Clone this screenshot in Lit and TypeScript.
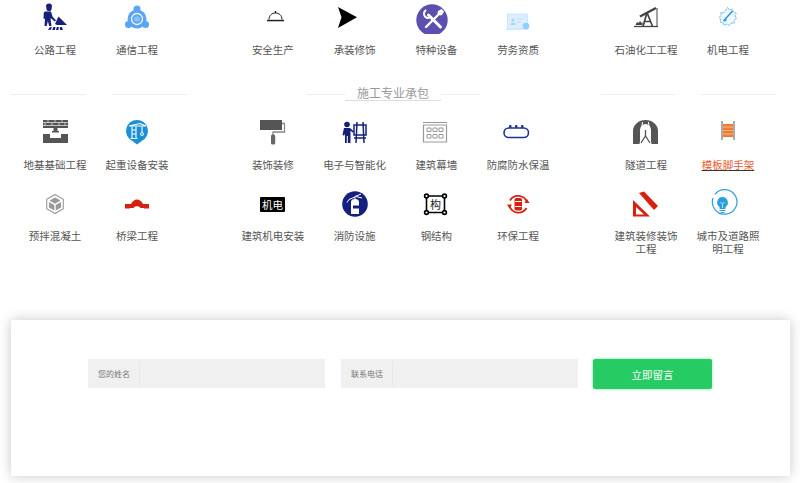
import { LitElement, html, css, svg, SVGTemplateResult } from "lit";
import { customElement } from "lit/decorators.js";

const NAVY = "#16207c";
const RED = "#d8200f";
const GR = "#555";

const icons: Record<string, SVGTemplateResult> = {
  worker: svg`<g fill="${NAVY}"><circle cx="14" cy="6.500" r="2.600"/><path d="M11 4.500a3 3 0 0 1 6 0v1h-6z"/><path d="M10 9.500h6l1.500 5 3.500 4-1.300 1-4-3.500v2.500l.8 5.500h-2.400l-1.200-5-1.200 5H9.500l.5-7-1.500-.5.300-6z"/><path d="M20 22l3.500-7.500L32 23H22z"/><path d="M13 28l2-3h2l-1.500 3zm4 0 1.500-3h2L20 28zm4 0 .8-3h2l-.3 3zm4 0-.2-3h2l1.200 3z"/></g>`,
  comm: svg`<g fill="#5aa5f5"><circle cx="20" cy="17" r="9.500"/><circle cx="20" cy="7" r="3.500"/><circle cx="11.500" cy="22.500" r="3.500"/><circle cx="28.500" cy="22.500" r="3.500"/></g><circle cx="20" cy="17" r="5.500" fill="none" stroke="#fff" stroke-width="1.300"/><circle cx="20" cy="17" r="2.800" fill="#8cc2f8"/>`,
  hat: svg`<g fill="none" stroke="#222" stroke-width="1"><path d="M16 17.500c0-4 2.800-6.500 6.500-6.500s6.500 2.500 6.500 6.500"/></g><path d="M14 17.800h17v1.500H14z" fill="#222"/><path d="M21.800 9h1.400v2h-1.400z" fill="#222"/>`,
  arrow: svg`<path d="M3 5l19 10.300L3 26l3.500-10.700z" fill="#000"/>`,
  tools: svg`<defs><clipPath id="c5"><rect x="0" y="0" width="34" height="32"/></clipPath></defs><circle cx="16" cy="18" r="15.700" fill="#5b4fb0" clip-path="url(#c5)"/><g stroke="#fff" fill="none" stroke-linecap="round"><path d="M12.500 13l12 12" stroke-width="3"/><path d="M23.500 11.500L10 25" stroke-width="2.400"/><path d="M9.500 8.500a4.200 4.200 0 0 0-.5 6 4.200 4.200 0 0 0 5.800 .500" stroke-width="2"/></g><path d="M22 9l3.500-2 2.500 2.500-2 3.500-2 .5-2.500-2.500z" fill="#fff"/>`,
  card: svg`<path d="M8 27.500h23" stroke="#dcefff" stroke-width="1"/><rect x="9.500" y="12" width="20" height="15" fill="#dcefff" stroke="#c3e2fb" stroke-width=".8"/><circle cx="15" cy="18" r="1.500" fill="#a9d6f8"/><path d="M12.500 23c0-2 1-2.500 2.500-2.500s2.500.5 2.500 2.500z" fill="#a9d6f8"/><path d="M19 17h7M19 20h4" stroke="#bfe0fb"/><circle cx="28" cy="24" r="3.300" fill="#8fd0fa"/>`,
  pump: svg`<g fill="none" stroke="#444"><path d="M8 24.500h24" stroke-width="1.300"/><path d="M14 14.500l16-8.500" stroke-width="2.400"/><path d="M31 6v18.500" stroke-width="1"/><path d="M21 10.500l-4 14M21 10.500l5.500 14M18.500 19.500h6.500" stroke-width="1.700"/></g><path d="M9.500 23l1.500-3 1.500 1 1.500-2 1.500 2 1-1v3z" fill="#444"/>`,
  gear: svg`<path d="M19.500 5.500l2 2.500 3-1 .7 3 3 1-1.200 3 1.500 2.500-2.500 1.700.2 3-3-.2-1.500 2.500-2.700-1.500-2.800 1.500-1.200-2.800-3-.7.700-3L11 15.500l2.300-2-.5-3 3 .2z" fill="#eef8fe" stroke="#6fc1ee" stroke-width="1" stroke-dasharray="3 .7"/><path d="M24.500 9l-9 10" stroke="#1c8fd8" stroke-width="1.300"/><path d="M18 17l-2.500 3.500 3.500-2.500z" fill="#1c8fd8"/>`,
  found: svg`<path d="M8 3h25v8H8z" fill="${GR}"/><path d="M8 5.500h25M8 8.500h25M13 3v2.500M20 3v2.500M27 3v2.500M10 5.500v3M17 5.500v3M24 5.500v3M30 5.500v3" stroke="#ddd" stroke-width=".8"/><path d="M18.500 11h4v3h1.500v1.500h-7V14h1.500z" fill="${GR}"/><path d="M8 17h7v4h11v-4h7v9H8z" fill="${GR}"/>`,
  crane: svg`<path d="M20 3a11 11 0 0 1 5 20.800L20 27.500l-5-3.700A11 11 0 0 1 20 3z" fill="#1a90d8"/><g fill="none" stroke="#fff" stroke-width="1.100"><path d="M12 9l11-2.500 6 2.500H12z"/><path d="M15 9.500v12M19 9.500v12M15 13h4M15 17h4M13.500 21.500h7"/><path d="M25 9.500v6"/></g><circle cx="25" cy="17" r="1.500" fill="none" stroke="#fff"/>`,
  roller: svg`<rect x="7" y="3" width="22" height="10" fill="${GR}"/><path d="M29 6.500h2.500v8.500H20v3" fill="none" stroke="#888" stroke-width="1.300"/><rect x="18" y="17.500" width="4.200" height="10" rx="1.500" fill="#666"/>`,
  teach: svg`<g fill="${NAVY}"><circle cx="12" cy="7.500" r="2.800"/><path d="M9 11h6l4 3.500-1 1.300-2.500-2V26h-2.700v-7h-1v7H10V16.800l-1 2-1.500-1z"/></g><g fill="none" stroke="${NAVY}" stroke-width="1.500"><path d="M19 8h12v10H19zM22 5l-1 21M28 5l1 21M19 21h12"/></g>`,
  curtain: svg`<g fill="none" stroke="#999"><path d="M7 5.500h24" stroke-width="1"/><path d="M7.500 8h23v17h-23z" stroke-width="1.200"/><path d="M11 11h4v3.500h-4zM17 11h4v3.500h-4zM23 11h4v3.500h-4zM11 17.500h4V21h-4zM17 17.500h4V21h-4zM23 17.500h4V21h-4z" stroke-width="1"/></g>`,
  water: svg`<rect x="6" y="11" width="24.500" height="9.500" rx="4.700" fill="none" stroke="#1f3590" stroke-width="1.600"/><g fill="#1f3590"><rect x="11" y="8" width="2.500" height="3" rx="1"/><rect x="17" y="8" width="2.500" height="3" rx="1"/><rect x="23" y="8" width="2.500" height="3" rx="1"/></g>`,
  tunnel: svg`<path d="M7 27V14a12.500 11 0 0 1 25 0v13h-6.500l-.5-3V13a5.500 6 0 0 0-11 0v11l-.5 3z" fill="${GR}"/><path d="M16.500 5l-1 9M22.500 5l1 9" stroke="#fff" stroke-width="1"/><path d="M15 26l4.500-7 4.500 7" fill="none" stroke="${GR}" stroke-width="1.300"/><path d="M19.500 13v6" stroke="${GR}" stroke-width="1.300"/>`,
  scaffold: svg`<rect x="13" y="4" width="2" height="19" fill="#aaa"/><rect x="25" y="4" width="2" height="19" fill="#aaa"/><rect x="15" y="7" width="10" height="13" fill="#f07c30"/><path d="M15 10h10M15 13.500h10M15 17h10" stroke="#fbc79e" stroke-width=".8"/>`,
  hex: svg`<path d="M20 5.500l8.300 4.700v9.600L20 24.500l-8.300-4.700v-9.600z" fill="none" stroke="#999" stroke-width="1.100"/><path d="M20 8.500l5.500 3.100-5.500 3.100-5.500-3.100zM14 13l5.300 3v5.500L14 18.500zM26 13l-5.300 3v5.500l5.300-3z" fill="#999"/>`,
  bridge: svg`<path d="M8 15h6c1.500-3 3.700-4.500 6-4.500s4.500 1.500 6 4.500h6v4.500h-5V19h-3.500c-.8-1.200-2-1.700-3.500-1.700s-2.700.5-3.500 1.700H13v.5H8z" fill="${RED}"/>`,
  mep: svg`<rect x="7" y="8" width="25" height="15" rx="1" fill="#000"/><text x="19.500" y="19.500" font-size="10.500" fill="#fff" text-anchor="middle" font-family="'Noto Sans CJK SC',sans-serif">机电</text>`,
  fire: svg`<circle cx="20" cy="15" r="12.800" fill="#14207f"/><path d="M16 13c0-2 1.500-3 4-3s4 1 4 3v12h-8z" fill="#fff"/><path d="M20 10V7.500M20 8l-6 2.500-2 3M20 7.500l6-2.500M21 7.500l6 1.500" stroke="#fff" stroke-width="1" fill="none"/><path d="M18 16.500h6v3h-6z" fill="#14207f"/>`,
  steel: svg`<path d="M10.500 7h18v16.500h-18z" fill="none" stroke="#000" stroke-width="1.600"/><g fill="#fff" stroke="#000" stroke-width="1.600"><circle cx="10.500" cy="7" r="1.900"/><circle cx="28.500" cy="7" r="1.900"/><circle cx="10.500" cy="23.500" r="1.900"/><circle cx="28.500" cy="23.500" r="1.900"/></g><text x="19.500" y="19.500" font-size="11" text-anchor="middle" fill="#222" font-family="'Noto Sans CJK SC',sans-serif">构</text>`,
  eco: svg`<g fill="none" stroke="${RED}" stroke-width="1.800"><path d="M12 11.500A9.500 9.500 0 0 1 29 13"/><path d="M28.500 19A9.500 9.500 0 0 1 11.500 17.500"/></g><path d="M9 15.500l2.500 4 2.500-4zM26.500 14l2.500-4 2.500 4z" fill="${RED}"/><rect x="16.500" y="9" width="7.500" height="12.500" rx="1.800" fill="${RED}"/><path d="M17 12.500h6.500M17 17.500h6.500" stroke="#fff" stroke-width="1"/>`,
  square: svg`<path d="M7 11v16.500h17zM10 18l8 7.500h-8z" fill="${RED}" fill-rule="evenodd"/><path d="M13 4l5-1.500 14 14.500-4 4z" fill="${RED}"/>`,
  bulb: svg`<path d="M7 5.300A12.300 12.300 0 1 1 5 9" fill="none" stroke="#2a9fdc" stroke-width="1.200"/><path d="M14.500 8a5.500 5.500 0 0 1 3 10v2h-6v-2a5.500 5.500 0 0 1 3-10z" fill="#2a9fdc"/><path d="M11.500 21.500h6M12.500 23.500h4" stroke="#2a9fdc" stroke-width="1.200"/><path d="M12.500 13l2 2 2-2M14.500 15v4" stroke="#fff" stroke-width=".7" fill="none"/>`,
};

type Item = { n: string; i: string; hot?: boolean };

const rowA: Item[][] = [
  [{ n: "公路工程", i: "worker" }, { n: "通信工程", i: "comm" }],
  [{ n: "安全生产", i: "hat" }, { n: "承装修饰", i: "arrow" }, { n: "特种设备", i: "tools" }, { n: "劳务资质", i: "card" }],
  [{ n: "石油化工工程", i: "pump" }, { n: "机电工程", i: "gear" }],
];
const rowB: Item[][] = [
  [{ n: "地基基础工程", i: "found" }, { n: "起重设备安装", i: "crane" }, { n: "预拌混凝土", i: "hex" }, { n: "桥梁工程", i: "bridge" }],
  [
    { n: "装饰装修", i: "roller" }, { n: "电子与智能化", i: "teach" }, { n: "建筑幕墙", i: "curtain" }, { n: "防腐防水保温", i: "water" },
    { n: "建筑机电安装", i: "mep" }, { n: "消防设施", i: "fire" }, { n: "钢结构", i: "steel" }, { n: "环保工程", i: "eco" },
  ],
  [
    { n: "隧道工程", i: "tunnel" }, { n: "模板脚手架", i: "scaffold", hot: true },
    { n: "建筑装修装饰工程", i: "square" }, { n: "城市及道路照明工程", i: "bulb" },
  ],
];

@customElement("app-root")
export class AppRoot extends LitElement {
  static styles = css`
    :host {
      display: block;
      width: 800px;
      height: 483px;
      overflow: hidden;
      background: #fff;
      font-family: "Noto Sans CJK SC", "Liberation Sans", sans-serif;
    }
    .groups {
      display: flex;
      padding-left: 14px;
    }
    .top {
      padding-top: 2px;
      height: 83px;
    }
    .g2 { margin-left: 54px; }
    .g3 { margin-left: 46px; }
    .cols2, .cols4 {
      display: grid;
      grid-auto-rows: 71.5px;
    }
    .cols2 { grid-template-columns: repeat(2, 82px); }
    .cols4 { grid-template-columns: repeat(4, 81.75px); }
    .item {
      display: flex;
      flex-direction: column;
      align-items: center;
      padding: 0 5px;
      color: #555;
      font-size: 10.5px;
      line-height: 13px;
      text-align: center;
    }
    .item svg {
      display: block;
      width: 40px;
      height: 36px;
      flex: none;
      margin-bottom: 4.5px;
    }
    .hot {
      color: #e8592a;
      text-decoration: underline;
      text-decoration-color: #333;
    }
    .divider {
      display: flex;
      align-items: flex-start;
      height: 16px;
      margin-bottom: 16px;
      padding-left: 10px;
    }
    .rule {
      flex: none;
      height: 1px;
      margin-top: 9px;
      background: #eee;
    }
    .r76 { width: 76px; }
    .r75 { width: 75px; margin-left: 26px; }
    .r39a { width: 39px; margin-left: 119px; }
    .r39b { width: 39px; }
    .r74 { width: 74px; margin-left: 121px; }
    .title {
      flex: none;
      width: 96px;
      height: 15px;
      border-bottom: 1px solid #ddd;
      text-align: center;
      font-size: 12px;
      line-height: 15px;
      color: #999;
    }
    .card {
      display: flex;
      align-items: flex-start;
      box-sizing: border-box;
      width: 779px;
      height: 156px;
      margin: 60px 0 0 11px;
      padding: 39px 0 0 77px;
      background: #fff;
      box-shadow: 0 0 12px rgba(0, 0, 0, 0.22);
    }
    .field {
      display: flex;
      align-items: center;
      flex: none;
      width: 237px;
      height: 29px;
      margin-right: 16px;
      background: #f0f0f0;
    }
    .field + .field { margin-right: 15px; }
    .field label {
      flex: none;
      box-sizing: border-box;
      width: 52px;
      height: 25px;
      padding-left: 10px;
      border-right: 1px solid #e8e8e8;
      font-size: 8px;
      line-height: 25px;
      color: #777;
    }
    .field input {
      flex: 1;
      min-width: 0;
      height: 100%;
      border: 0;
      padding: 0;
      background: transparent;
    }
    button {
      flex: none;
      width: 119px;
      height: 30px;
      border: 0;
      border-radius: 2px;
      background: #26cc63;
      box-shadow: 0 0 3px rgba(38, 204, 99, 0.6);
      color: #fff;
      font: inherit;
      font-size: 10.5px;
    }
  `;

  private item(it: Item) {
    return html`<div class="item">
      <svg viewBox="0 0 40 36">${icons[it.i]}</svg>
      <span class=${it.hot ? "hot" : ""}>${it.n}</span>
    </div>`;
  }

  private groups(data: Item[][], top = false) {
    return html`<div class="groups ${top ? "top" : ""}">
      ${data.map(
        (g, i) => html`<div class="${i === 1 ? "cols4 g2" : "cols2"} ${i === 2 ? "g3" : ""}">
          ${g.map((it) => this.item(it))}
        </div>`
      )}
    </div>`;
  }

  render() {
    return html`
      ${this.groups(rowA, true)}
      <div class="divider">
        <div class="rule r76"></div>
        <div class="rule r75"></div>
        <div class="rule r39a"></div>
        <div class="title">施工专业承包</div>
        <div class="rule r39b"></div>
        <div class="rule r74"></div>
        <div class="rule r75"></div>
      </div>
      ${this.groups(rowB)}
      <form class="card">
        <div class="field"><label>您的姓名</label><input type="text" /></div>
        <div class="field"><label>联系电话</label><input type="text" /></div>
        <button type="button">立即留言</button>
      </form>
    `;
  }
}
